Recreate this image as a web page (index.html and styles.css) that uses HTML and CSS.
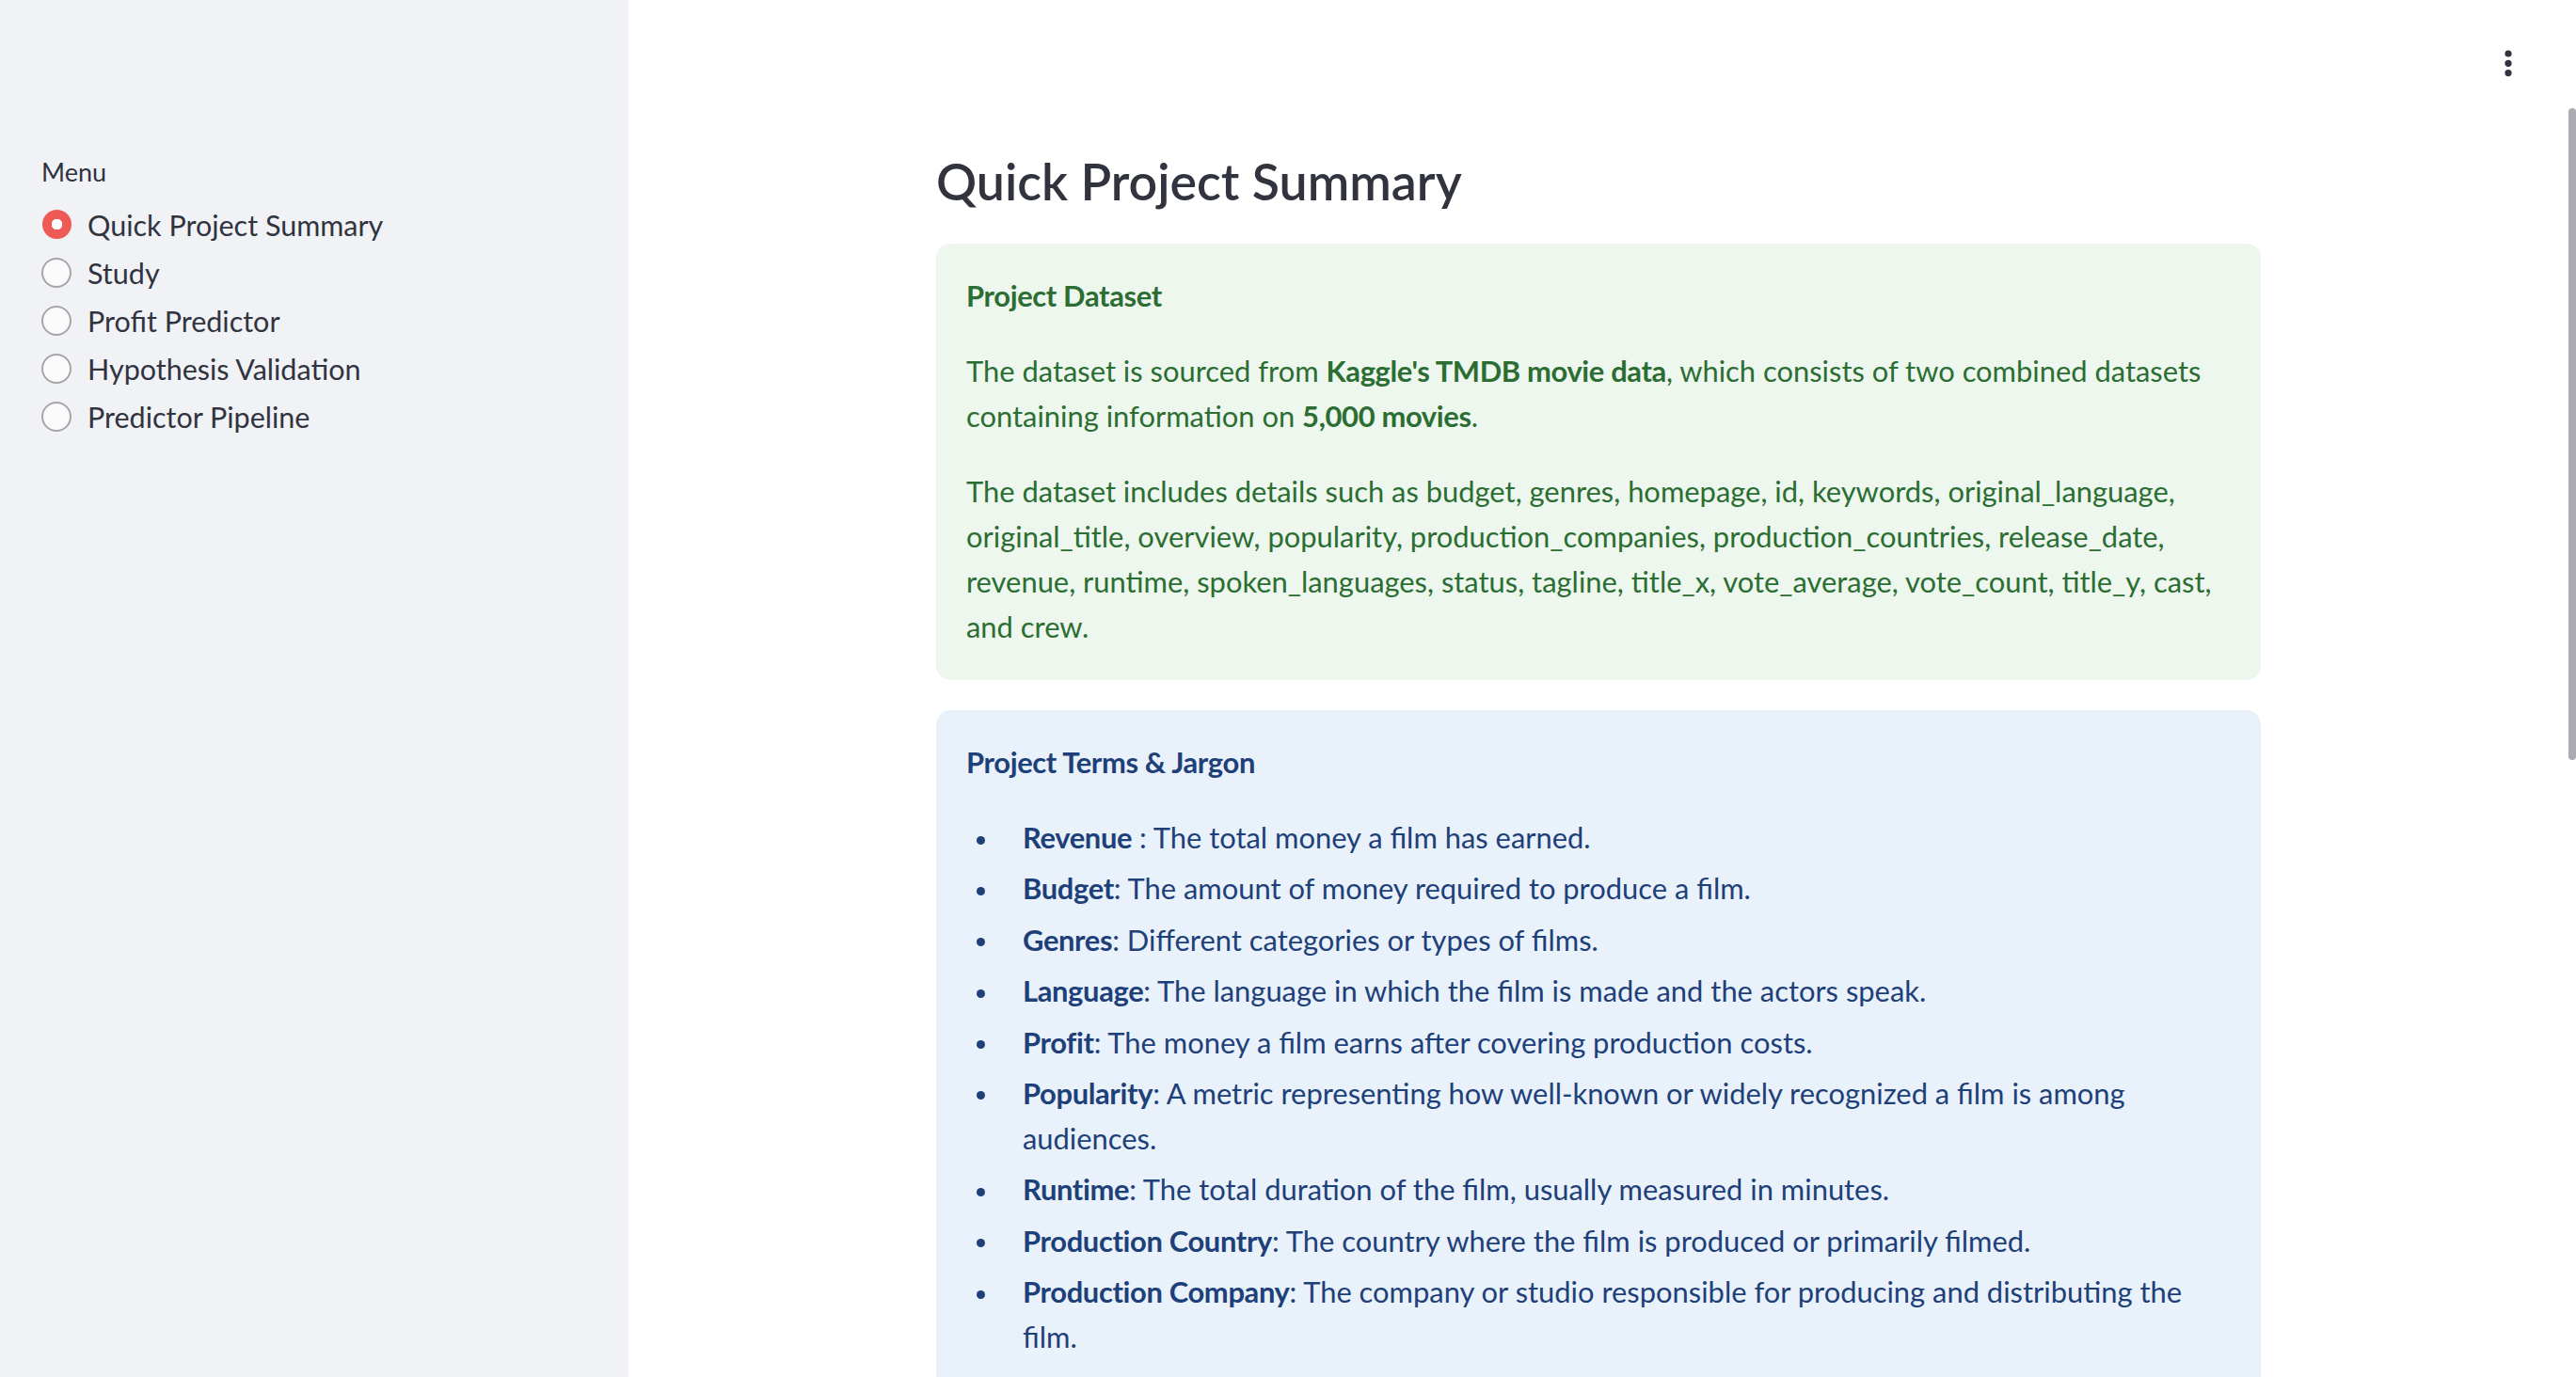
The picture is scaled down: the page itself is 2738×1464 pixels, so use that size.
FILE: index.html
```html
<!DOCTYPE html>
<html lang="en">
<head>
<meta charset="utf-8">
<title>Quick Project Summary</title>
<link rel="stylesheet" href="styles.css">
</head>
<body>
<aside class="sidebar">
  <div class="menu-label">Menu</div>
  <div class="radio-list">
    <div class="radio"><span class="dot on"></span><span>Quick Project Summary</span></div>
    <div class="radio"><span class="dot"></span><span>Study</span></div>
    <div class="radio"><span class="dot"></span><span>Profit Predictor</span></div>
    <div class="radio"><span class="dot"></span><span>Hypothesis Validation</span></div>
    <div class="radio"><span class="dot"></span><span>Predictor Pipeline</span></div>
  </div>
</aside>
<main class="main">
  <div class="kebab">
    <svg width="8" height="30" viewBox="0 0 8 30"><circle cx="4" cy="4" r="3.6" fill="#31333F"/><circle cx="4" cy="14.3" r="3.6" fill="#31333F"/><circle cx="4" cy="24.6" r="3.6" fill="#31333F"/></svg>
  </div>
  <div class="scroll-thumb"></div>
  <div class="content">
    <h1 class="title">Quick Project Summary</h1>
    <div class="alert success">
      <p><strong>Project Dataset</strong></p>
      <p>The dataset is sourced from <strong>Kaggle's TMDB movie data</strong>, which consists of two combined datasets containing information on <strong>5,000 movies</strong>.</p>
      <p>The dataset includes details such as budget, genres, homepage, id, keywords, original_language, original_title, overview, popularity, production_companies, production_countries, release_date, revenue, runtime, spoken_languages, status, tagline, title_x, vote_average, vote_count, title_y, cast, and crew.</p>
    </div>
    <div class="alert info">
      <p><strong>Project Terms &amp; Jargon</strong></p>
      <ul>
        <li><strong>Revenue</strong> : The total money a film has earned.</li>
        <li><strong>Budget</strong>: The amount of money required to produce a film.</li>
        <li><strong>Genres</strong>: Different categories or types of films.</li>
        <li><strong>Language</strong>: The language in which the film is made and the actors speak.</li>
        <li><strong>Profit</strong>: The money a film earns after covering production costs.</li>
        <li><strong>Popularity</strong>: A metric representing how well-known or widely recognized a film is among audiences.</li>
        <li><strong>Runtime</strong>: The total duration of the film, usually measured in minutes.</li>
        <li><strong>Production Country</strong>: The country where the film is produced or primarily filmed.</li>
        <li><strong>Production Company</strong>: The company or studio responsible for producing and distributing the film.</li>
      </ul>
    </div>
  </div>
</main>
</body>
</html>
```
FILE: styles.css
```css
* { box-sizing: border-box; }
html, body { margin: 0; height: 100%; }
body {
  display: flex;
  overflow: hidden;
  background: #ffffff;
  color: #31333F;
  font-family: Lato, "Noto Sans", sans-serif;
}
.sidebar {
  flex: none;
  width: 668px;
  height: 1464px;
  background: #F0F2F6;
  padding: 160px 0 0 44px;
}
.menu-label {
  font-size: 27px;
  line-height: 45px;
  margin-bottom: 8px;
}
.radio-list { display: flex; flex-direction: column; }
.radio {
  display: flex;
  align-items: center;
  gap: 17px;
  height: 51.2px;
  font-size: 30.5px;
}
.dot {
  flex: none;
  width: 32px;
  height: 32px;
  border-radius: 50%;
  border: 2px solid #a6a6ab;
  background: #fafafa;
}
.dot.on {
  border: none;
  width: 31px;
  height: 31px;
  margin-left: 1px;
  background: radial-gradient(circle, #ffffff 0 5.5px, #ef5a55 6px);
}
.main {
  position: relative;
  flex: 1;
  height: 1464px;
  overflow: hidden;
  padding-right: 8px;
}
.kebab {
  position: absolute;
  top: 53px;
  right: 68px;
  line-height: 0;
}
.scroll-thumb {
  position: absolute;
  right: 0;
  top: 115px;
  width: 8px;
  height: 693px;
  border-radius: 4px;
  background: #aaaab0;
}
.content {
  width: 1408px;
  margin: 0 auto;
  padding-top: 158px;
}
.title {
  margin: 0 0 33px;
  font-size: 53.7px;
  line-height: 68px;
  font-weight: 600;
  color: #31333F;
}
.alert {
  border-radius: 15px;
  padding: 32px;
  font-size: 30.9px;
  line-height: 48px;
}
.alert p { margin: 0 0 32px; }
.alert p:last-child { margin-bottom: 0; }
.alert strong { font-weight: 700; letter-spacing: -0.35px; }
.success {
  background: #EDF7EE;
  color: #2b6d32;
  margin-bottom: 32px;
}
.info {
  background: #E9F1FB;
  color: #1e4079;
}
.info ul {
  list-style: none;
  margin: 0;
  padding: 0 0 0 60px;
}
.info li {
  position: relative;
  margin-bottom: 6.4px;
}
.info li::before {
  content: "";
  position: absolute;
  left: -49px;
  top: 21.5px;
  width: 9px;
  height: 9px;
  border-radius: 50%;
  background: currentColor;
}
```
